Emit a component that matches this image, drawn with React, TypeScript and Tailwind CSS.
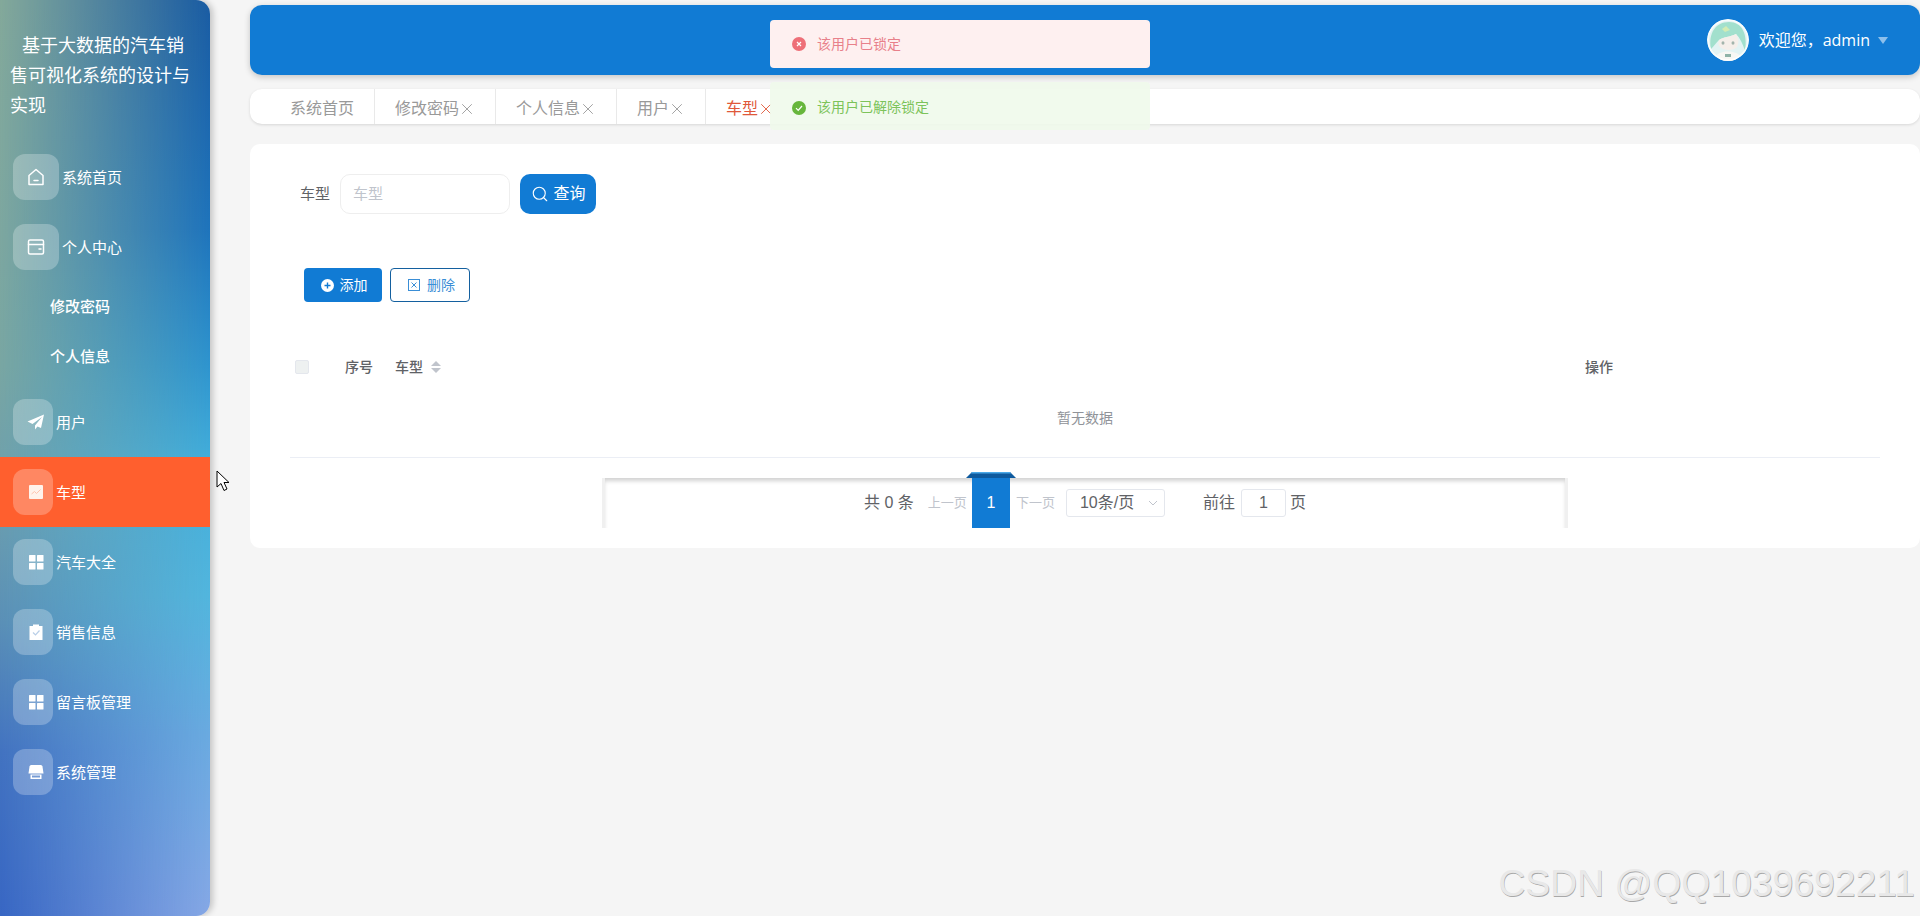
import { X, Search } from 'lucide-react';

const FONT = "font-['Liberation_Sans','Noto_Sans_CJK_SC',sans-serif]";

function HomeIcon() {
    return (
        <svg width="18" height="18" viewBox="0 0 18 18" fill="none" stroke="#fff" strokeWidth="1.5" strokeLinejoin="round" strokeLinecap="round">
            <path d="M9 1.5 2 7.5V16.5H16V7.5Z" />
            <path d="M7 12.5H11" />
        </svg>
    );
}

function WalletIcon() {
    return (
        <svg width="18" height="18" viewBox="0 0 18 18" fill="none" stroke="#fff" strokeWidth="1.5" strokeLinecap="round">
            <rect x="1.5" y="2" width="15" height="14" rx="1.5" />
            <path d="M1.5 6.5H16.5" />
            <path d="M12 11H14" />
        </svg>
    );
}

function PlaneIcon() {
    return (
        <svg width="18" height="18" viewBox="0 0 18 18" fill="#fff">
            <path d="M17 1.5 0.5 8.5 5.5 11 15 4 8 12.5V16.5L10.5 13.5 14 15Z" />
        </svg>
    );
}

function ChartIcon() {
    return (
        <svg width="18" height="18" viewBox="0 0 18 18">
            <rect x="2" y="2" width="14" height="14" rx="1" fill="#fff3ec" />
            <path d="M4.5 11 7.5 8.5 9.5 10.5 13.5 6.5" fill="none" stroke="#ffc4ae" strokeWidth="1" />
        </svg>
    );
}

function GridIcon() {
    return (
        <svg width="18" height="18" viewBox="0 0 18 18" fill="#fff">
            <rect x="2" y="2" width="6.5" height="6.5" rx="0.5" />
            <rect x="10" y="2" width="6.5" height="6.5" rx="0.5" />
            <rect x="2" y="10" width="6.5" height="6.5" rx="0.5" />
            <rect x="10" y="10" width="6.5" height="6.5" rx="0.5" />
        </svg>
    );
}

function ClaimIcon() {
    return (
        <svg width="18" height="18" viewBox="0 0 18 18">
            <path d="M2.5 3H6V1.5H12V3H15.5V17H2.5Z" fill="#fff" />
            <path d="M6 9.5 8.5 12 12.5 7.5" fill="none" stroke="#b9cfe8" strokeWidth="1.2" />
        </svg>
    );
}

function PlatformIcon() {
    return (
        <svg width="18" height="18" viewBox="0 0 18 18" fill="#fff">
            <path d="M4.5 2H13.5C14.5 2 15 2.5 15.5 3.5L16.5 10.5H1.5L2.5 3.5C3 2.5 3.5 2 4.5 2Z" />
            <path d="M3.5 11.5H14.5V16H3.5ZM5 12.5V14.5H13V12.5Z" fillRule="evenodd" />
        </svg>
    );
}

const MENU_TOP = [
    { label: '系统首页', icon: <HomeIcon />, wide: true },
    { label: '个人中心', icon: <WalletIcon />, wide: true },
];
const MENU_BOTTOM = [
    { label: '汽车大全', icon: <GridIcon /> },
    { label: '销售信息', icon: <ClaimIcon /> },
    { label: '留言板管理', icon: <GridIcon /> },
    { label: '系统管理', icon: <PlatformIcon /> },
];

function MenuRow({ label, icon, wide, active }: { label: string; icon: React.ReactNode; wide?: boolean; active?: boolean }) {
    return (
        <div className={`flex h-[70px] items-center pl-[13px] text-[15px] text-white ${active ? 'bg-[#ff5f2e]' : ''}`}>
            <div className={`flex h-[46px] items-center rounded-xl bg-white/25 pl-[14px] ${wide ? 'w-[46px]' : 'w-[40px]'}`}>{icon}</div>
            <span className="ml-[3px] pt-[2px]">{label}</span>
        </div>
    );
}

function Sidebar() {
    return (
        <aside className="relative h-[916px] w-[210px] shrink-0 overflow-hidden rounded-r-[14px] bg-[linear-gradient(to_bottom,#1a5ca3_0%,#1f74bc_25%,#2f95cf_40%,#42aedb_50%,#52b6de_65%,#6aabe1_80%,#86a8e6_100%)] shadow-[3px_0_6px_rgba(0,0,0,0.2)]">
            <div className="absolute inset-0 bg-[linear-gradient(to_bottom,#84a99a_0%,#79a6a2_40%,#6c9eae_55%,#5a8fb6_68%,#4272c0_82%,#3766c3_100%)] [mask-image:linear-gradient(to_right,#000,transparent)]" />
            <div className="relative">
                <div className="h-[142px] px-[10px] pt-[31px] text-[18px] leading-[30px] text-white [text-indent:12px]">基于大数据的汽车销售可视化系统的设计与实现</div>
                {MENU_TOP.map((m) => <MenuRow key={m.label} {...m} />)}
                <div className="pb-[5px]">
                    <div className="flex h-[50px] items-center pl-[50px] text-[15px] font-medium text-white">修改密码</div>
                    <div className="flex h-[50px] items-center pl-[50px] text-[15px] font-medium text-white">个人信息</div>
                </div>
                <MenuRow label="用户" icon={<PlaneIcon />} />
                <MenuRow label="车型" icon={<ChartIcon />} active />
                {MENU_BOTTOM.map((m) => <MenuRow key={m.label} {...m} />)}
            </div>
        </aside>
    );
}

function Avatar() {
    return (
        <svg width="42" height="42" viewBox="0 0 42 42" className="rounded-full">
            <circle cx="21" cy="21" r="21" fill="#e3f3f3" />
            <path d="M4 30C1 14 9 3 22 3 35 3 41 15 38 32 36 25 33 19 29 15 23 18 16 18 12 21 9 24 7 27 4 30Z" fill="#a2e0cd" />
            <path d="M12 21C16 18 23 18 29 15 32 19 32 24 30 28 26 32 17 32 13 28 11 26 11 24 12 21Z" fill="#f5efea" />
            <ellipse cx="16" cy="24" rx="1.5" ry="1.8" fill="#a3b4ac" />
            <ellipse cx="26" cy="24" rx="1.5" ry="1.8" fill="#a3b4ac" />
            <path d="M9 37C13 31 29 31 33 37L27 42H15Z" fill="#f7f7f4" />
            <path d="M18 35H24V38H18Z" fill="#8fb3a8" />
            <path d="M15 10 19 7 23 11 18 13Z" fill="#d3ecb4" />
            <circle cx="21" cy="21" r="20" fill="none" stroke="#ffffff" strokeOpacity="0.7" strokeWidth="2" />
        </svg>
    );
}

function Header() {
    return (
        <header className="flex h-[70px] items-center justify-end rounded-xl bg-[#117bd4] pr-[32px] shadow-[0_2px_6px_rgba(0,0,0,0.2)]">
            <Avatar />
            <span className="ml-[10px] text-[16px] text-white">
                欢迎您，<span className="font-['Open_Sans',sans-serif]">admin</span>
            </span>
            <span className="ml-[8px] h-0 w-0 border-x-[5px] border-t-[7px] border-x-transparent border-t-[#8dc0ec]" />
        </header>
    );
}

const TABS = ['修改密码', '个人信息', '用户'];

function Tabs() {
    return (
        <div className="mt-[14px] flex h-[35px] items-center rounded-xl bg-white pl-[20px] text-[16px] text-[#999] shadow-[0_1px_3px_rgba(0,0,0,0.12)]">
            <span className="flex h-full items-center border-r border-[#e9e9e9] px-[20px] pt-[4px]">系统首页</span>
            {TABS.map((t) => (
                <span key={t} className="flex h-full items-center border-r border-[#e9e9e9] px-[20px] pt-[4px]">
                    {t}
                    <X size={18} strokeWidth={1.2} className="-mx-[1px]" />
                </span>
            ))}
            <span className="flex h-full items-center px-[20px] pt-[4px] text-[#e0583a]">
                车型
                <X size={18} strokeWidth={1.2} className="-mx-[1px]" />
            </span>
        </div>
    );
}

function SearchRow() {
    return (
        <div className="flex items-center pl-[50px] pt-[30px]">
            <span className="text-[15px] text-[#606266]">车型</span>
            <div className="ml-[10px] flex h-[40px] w-[170px] items-center rounded-[10px] border border-[#eeeeee] pl-[12px] text-[15px] text-[#c0c4cc]">车型</div>
            <button type="button" className="ml-[10px] flex h-[40px] w-[76px] items-center justify-center gap-[5px] rounded-[10px] bg-[#117bd4] text-[16px] text-white">
                <Search size={18} strokeWidth={1.5} />
                查询
            </button>
        </div>
    );
}

function Actions() {
    return (
        <div className="mt-[54px] flex gap-[8px] pl-[54px] text-[14px]">
            <button type="button" className="flex h-[34px] w-[78px] items-center justify-center gap-[6px] rounded-[4px] bg-[#117bd4] pl-[2px] text-white">
                <svg width="13" height="13" viewBox="0 0 13 13">
                    <circle cx="6.5" cy="6.5" r="6.5" fill="#fff" />
                    <path d="M6.5 3.5V9.5M3.5 6.5H9.5" stroke="#117bd4" strokeWidth="1.4" />
                </svg>
                添加
            </button>
            <button type="button" className="flex h-[34px] w-[80px] items-center justify-center gap-[7px] rounded-[4px] border border-[#14609f] bg-white pl-[3px] text-[#3a8ed6]">
                <svg width="12" height="12" viewBox="0 0 12 12" fill="none" stroke="#3a8ed6" strokeWidth="1">
                    <rect x="0.5" y="0.5" width="11" height="11" />
                    <path d="M3.5 3.5 8.5 8.5M8.5 3.5 3.5 8.5" />
                </svg>
                删除
            </button>
        </div>
    );
}

function Table() {
    return (
        <div className="ml-[40px] mr-[40px] mt-[40px] border-b border-[#ebeef5] pb-[15px]">
            <div className="flex h-[50px] items-center text-[14px] font-medium text-[#606266]">
                <div className="w-[55px] pl-[5px]">
                    <div className="h-[14px] w-[14px] rounded-[2px] border border-[#e4e7ed] bg-[#eef1f1]" />
                </div>
                <div className="w-[50px]">序号</div>
                <div className="flex flex-1 items-center">
                    车型
                    <div className="ml-[8px] flex flex-col gap-[2px]">
                        <span className="h-0 w-0 border-x-[5px] border-b-[5px] border-x-transparent border-b-[#c0c4cc]" />
                        <span className="h-0 w-0 border-x-[5px] border-t-[5px] border-x-transparent border-t-[#c0c4cc]" />
                    </div>
                </div>
                <div className="w-[295px]">操作</div>
            </div>
            <div className="flex h-[50px] items-center justify-center pt-[2px] text-[14px] text-[#909399]">暂无数据</div>
        </div>
    );
}

function Pagination() {
    return (
        <div className="mb-[20px] ml-[352px] mr-[352px] mt-[20px] flex h-[50px] items-stretch justify-center border-x-[3px] border-[#f0f0f0] text-[16px] text-[#606266] shadow-[inset_0_4px_4px_-1px_rgba(0,0,0,0.18)]">
            <span className="flex items-center">共 0 条</span>
            <span className="ml-[14px] flex items-center text-[13px] text-[#c0c4cc]">上一页</span>
            <div className="relative ml-[5px] flex w-[38px] items-center justify-center bg-[#117bd4] text-white">
                1
                <svg width="50" height="6" viewBox="0 0 50 6" className="absolute -top-[6px] left-[-6px]">
                    <path d="M6 0H44L50 6H0Z" fill="#0e5a9e" />
                    <path d="M6 0H44L45 1.5H5Z" fill="#4aa8e8" />
                </svg>
            </div>
            <span className="ml-[6px] flex items-center text-[13px] text-[#c0c4cc]">下一页</span>
            <div className="ml-[11px] flex h-[28px] w-[99px] items-center self-center rounded-[3px] border border-[#e4e7ed] pl-[13px]">
                10条/页
                <svg width="10" height="6" viewBox="0 0 10 6" fill="none" stroke="#c0c4cc" className="ml-[14px]">
                    <path d="M1 1 5 5 9 1" />
                </svg>
            </div>
            <span className="ml-[38px] flex items-center">前往</span>
            <div className="ml-[6px] flex h-[28px] w-[45px] items-center justify-center self-center rounded-[3px] border border-[#e4e7ed]">1</div>
            <span className="ml-[4px] flex items-center">页</span>
        </div>
    );
}

export default function App() {
    return (
        <div className={`relative flex h-[916px] w-full overflow-hidden bg-[#f5f5f5] ${FONT}`}>
            <Sidebar />
            <main className="flex-1 pl-[40px] pt-[5px]">
                <Header />
                <Tabs />
                <section className="mt-[20px] flex flex-col rounded-[10px] bg-white">
                    <SearchRow />
                    <Actions />
                    <Table />
                    <Pagination />
                </section>
            </main>
            <div className="absolute left-[770px] top-[20px] flex h-[48px] w-[380px] items-center rounded-[4px] bg-[#fef0f0] pl-[22px] text-[14px] text-[#e8808a]">
                <svg width="14" height="14" viewBox="0 0 14 14">
                    <circle cx="7" cy="7" r="7" fill="#ee6f78" />
                    <path d="M5 5 9 9M9 5 5 9" stroke="#fff" strokeWidth="1.2" />
                </svg>
                <span className="ml-[11px]">该用户已锁定</span>
            </div>
            <div className="absolute left-[770px] top-[82px] flex h-[48px] w-[380px] items-center rounded-[4px] bg-[#f0f9eb]/90 pl-[22px] pt-[3px] text-[14px] text-[#7cc35a]">
                <svg width="14" height="14" viewBox="0 0 14 14">
                    <circle cx="7" cy="7" r="7" fill="#67b63c" />
                    <path d="M4 7.2 6.2 9.4 10 5" stroke="#fff" strokeWidth="1.2" fill="none" />
                </svg>
                <span className="ml-[11px]">该用户已解除锁定</span>
            </div>
            <svg width="14" height="22" viewBox="0 0 14 22" className="absolute left-[216px] top-[470px]">
                <path d="M1 1V17L5 13.5 8 20.5 11 19 8 12.5H13Z" fill="#fff" stroke="#000" strokeWidth="1" />
            </svg>
            <div className="absolute right-[5px] top-[862px] text-[37.3px] leading-[42px] text-[#e8e8e8] [text-shadow:0.6px_0.6px_0.6px_#a8a8a8]">CSDN @QQ1039692211</div>
        </div>
    );
}
